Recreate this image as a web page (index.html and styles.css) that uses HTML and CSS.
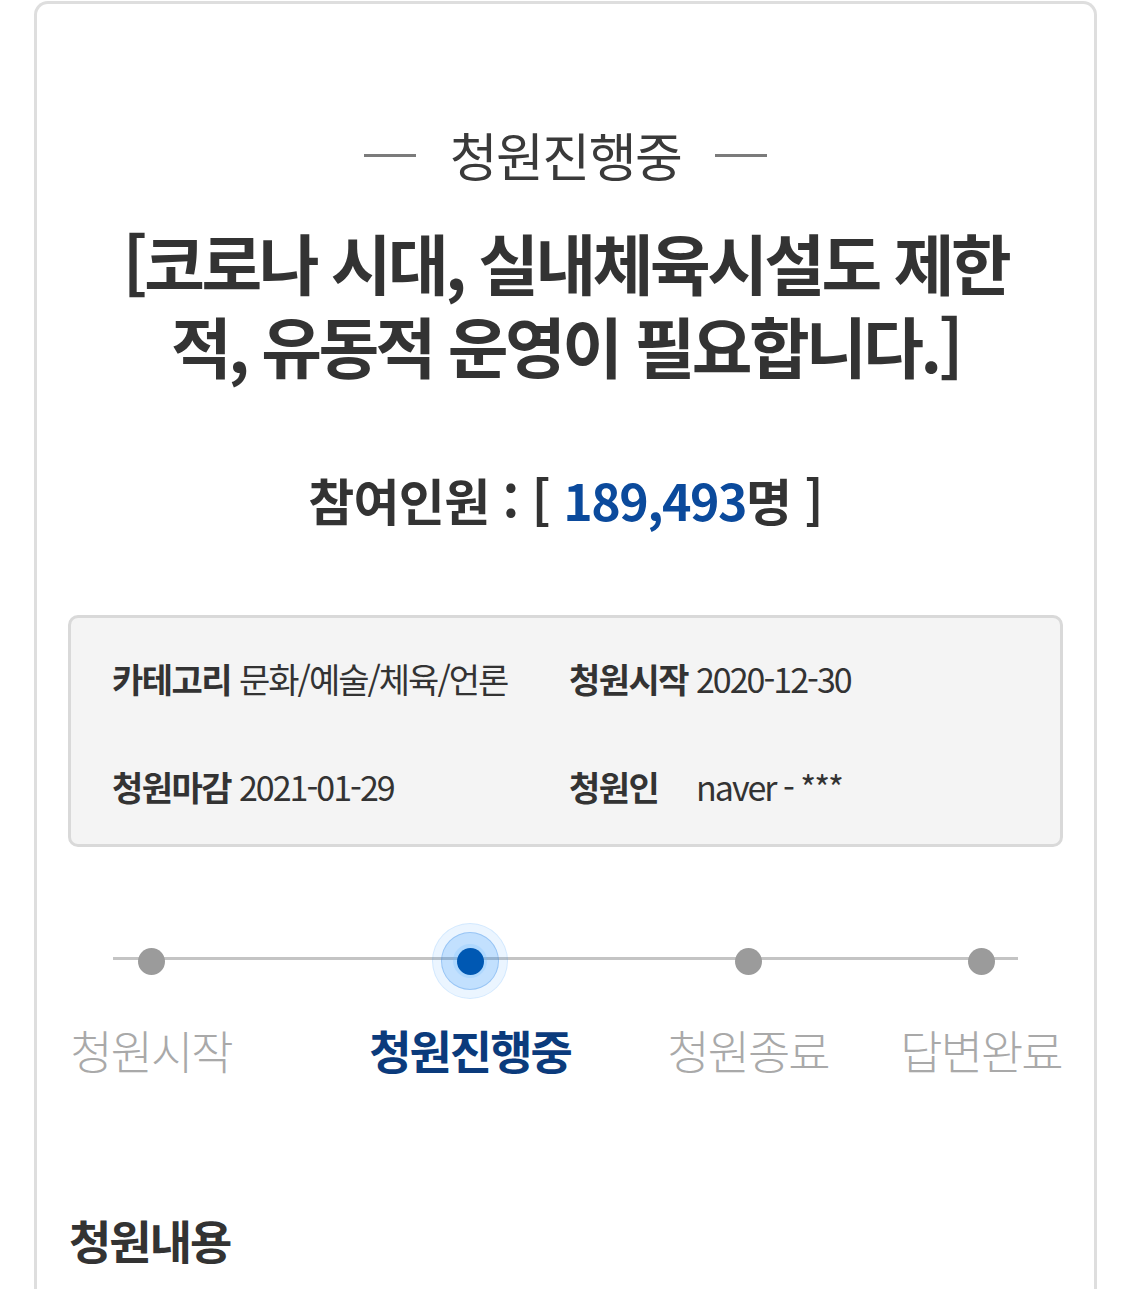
FILE: index.html
```html
<!DOCTYPE html>
<html lang="ko">
<head>
<meta charset="utf-8">
<title>청원진행중</title>
<link rel="stylesheet" href="styles.css">
</head>
<body>
<main class="card">
  <div class="status">
    <span class="dash"></span>
    <span class="status-text">청원진행중</span>
    <span class="dash"></span>
  </div>
  <h1 class="title">[코로나 시대, 실내체육시설도 제한적, 유동적 운영이 필요합니다.]</h1>
  <p class="count">참여인원 : [ <span class="num">189,493</span>명 ]</p>

  <div class="info">
    <div class="info-item"><span class="label">카테고리</span><span class="value">문화/예술/체육/언론</span></div>
    <div class="info-item"><span class="label">청원시작</span><span class="value">2020-12-30</span></div>
    <div class="info-item"><span class="label">청원마감</span><span class="value">2021-01-29</span></div>
    <div class="info-item"><span class="label">청원인</span><span class="value">naver - ***</span></div>
  </div>

  <ol class="steps">
    <li class="step"><span class="marker"><span class="dot"></span></span><span class="step-label">청원시작</span></li>
    <li class="step active"><span class="marker"><span class="ring"></span><span class="dot"></span></span><span class="step-label">청원진행중</span></li>
    <li class="step"><span class="marker"><span class="dot"></span></span><span class="step-label">청원종료</span></li>
    <li class="step"><span class="marker"><span class="dot"></span></span><span class="step-label">답변완료</span></li>
  </ol>

  <h2 class="section-title">청원내용</h2>
</main>
</body>
</html>
```
FILE: styles.css
```css
* { box-sizing: border-box; }
html, body { margin: 0; padding: 0; background: #fff; }
body {
  font-family: "Noto Sans CJK KR", "Noto Sans", sans-serif;
  color: #333;
  overflow: hidden;
}
.card {
  margin: 1px 28px 0 34px;
  min-height: 1400px;
  border: 3px solid #dedede;
  border-bottom: none;
  border-radius: 14px 14px 0 0;
  padding: 0 31px;
}
.status {
  display: flex;
  justify-content: center;
  align-items: center;
  gap: 34px;
  padding-top: 121px;
  height: 181px;
}
.dash {
  width: 52px;
  height: 3px;
  background: #7b7b7b;
}
.status-text {
  font-size: 52px;
  line-height: 60px;
  font-weight: 400;
  letter-spacing: -1.5px;
  color: #3a3a3a;
}
.title {
  margin: 35px auto 0;
  width: 910px;
  text-align: center;
  font-size: 66px;
  line-height: 83px;
  font-weight: 700;
  letter-spacing: -3.5px;
  color: #333;
}
.count {
  margin: 83px 0 0;
  text-align: center;
  font-size: 50px;
  line-height: 60px;
  font-weight: 700;
  letter-spacing: -0.7px;
  color: #333;
}
.num { color: #0b4a9c; letter-spacing: -1.5px; }
.info {
  margin-top: 86px;
  height: 232px;
  border: 3px solid #d9d9d9;
  border-radius: 10px;
  background: #f4f4f4;
  padding: 34px 20px 30px 41px;
  display: grid;
  grid-template-columns: 457px 1fr;
  grid-auto-rows: 54px;
  row-gap: 54px;
}
.info-item {
  display: flex;
  align-items: center;
  font-size: 34px;
  line-height: 54px;
  white-space: nowrap;
}
.label {
  width: 127px;
  flex: none;
  font-weight: 700;
  letter-spacing: -1.5px;
  color: #333;
}
.value {
  font-weight: 400;
  letter-spacing: -2px;
  color: #333;
}
.steps {
  list-style: none;
  margin: 76px 0 0;
  padding: 0;
  position: relative;
  display: grid;
  grid-template-columns: 166px 153px 166px 112px 166px 67px 166px;
}
.steps::before {
  content: "";
  position: absolute;
  left: 45px;
  right: 45px;
  top: 34px;
  height: 3px;
  background: #c4c4c4;
}
.step {
  display: flex;
  flex-direction: column;
  align-items: center;
  position: relative;
}
.step:nth-child(1) { grid-column: 1; }
.step:nth-child(2) { grid-column: 3; }
.step:nth-child(3) { grid-column: 5; }
.step:nth-child(4) { grid-column: 7; }
.marker {
  width: 76px;
  height: 76px;
  display: flex;
  align-items: center;
  justify-content: center;
  position: relative;
}
.dot {
  width: 27px;
  height: 27px;
  border-radius: 50%;
  background: #9b9b9b;
  position: relative;
}
.active .dot { background: #0058b3; }
.ring {
  position: absolute;
  inset: 0;
  border-radius: 50%;
  background: rgba(30, 140, 250, 0.09);
  border: 1px solid rgba(30, 140, 250, 0.12);
}
.ring::before {
  content: "";
  position: absolute;
  left: 8px; top: 8px; right: 8px; bottom: 8px;
  border-radius: 50%;
  background: rgba(30, 140, 250, 0.2);
  border: 1px solid rgba(0, 100, 210, 0.22);
}
.ring::after {
  content: "";
  position: absolute;
  left: 20px; top: 20px; right: 20px; bottom: 20px;
  border-radius: 50%;
  background: rgba(120, 190, 255, 0.25);
}
.step-label {
  margin-top: 22px;
  font-size: 46px;
  line-height: 56px;
  font-weight: 300;
  letter-spacing: -2px;
  color: #a9a9a9;
  white-space: nowrap;
}
.active .step-label {
  font-weight: 700;
  color: #0b3b7c;
}
.section-title {
  margin: 135px 0 0 1px;
  font-size: 46px;
  line-height: 54px;
  font-weight: 700;
  letter-spacing: -2px;
  color: #333;
}
```
